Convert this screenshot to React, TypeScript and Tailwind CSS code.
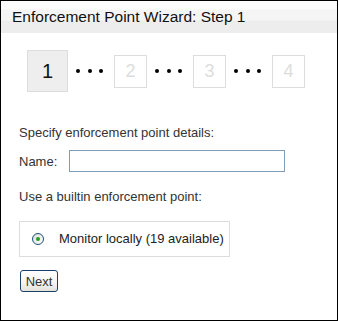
import { useState } from 'react';

const STEPS = [1, 2, 3, 4];

function Dots() {
  return (
    <span className="mx-[8px] mr-[11px] flex w-[27px] items-center justify-between">
      <span className="h-[4px] w-[4px] rounded-full bg-black" />
      <span className="h-[4px] w-[4px] rounded-full bg-black" />
      <span className="h-[4px] w-[4px] rounded-full bg-black" />
    </span>
  );
}

export default function App() {
  const [name, setName] = useState('');

  return (
    <div className="h-[321px] w-[338px] border border-black bg-white font-['Liberation_Sans',Arial,sans-serif] text-[13px] text-[#333]">
      <div className="h-[32px] bg-[linear-gradient(#fcfcfc_0,#fcfcfc_8px,#f5f5f5_9px,#f5f5f5_19px,#ededed_20px,#ededed_100%)] pl-[11px] pt-[7px] text-[15.5px] leading-[18px] text-[#111]">
        Enforcement Point Wizard: Step 1
      </div>

      <div className="ml-[26px] mt-[17px] flex items-center">
        {STEPS.map((n, i) => (
          <div key={n} className="flex items-center">
            {i > 0 && <Dots />}
            {n === 1 ? (
              <div className="flex h-[42px] w-[41px] items-center justify-center border border-[#dddddd] bg-[#eeeeee] text-[20px] text-[#111]">
                {n}
              </div>
            ) : (
              <div className="flex h-[33px] w-[33px] items-center justify-center border border-[#dddddd] bg-white text-[18px] text-[#dddddd]">
                {n}
              </div>
            )}
          </div>
        ))}
      </div>

      <div className="ml-[18px] mt-[33px] leading-[15px]">Specify enforcement point details:</div>

      <div className="ml-[18px] mt-[10px] flex items-center">
        <label htmlFor="ep-name" className="w-[50px] leading-[15px]">Name:</label>
        <input
          id="ep-name"
          value={name}
          onChange={(e) => setName(e.target.value)}
          className="h-[22px] w-[216px] border border-[#7f9db9] bg-white px-[2px] outline-none"
        />
      </div>

      <div className="ml-[18px] mt-[17px] leading-[15px]">Use a builtin enforcement point:</div>

      <div className="ml-[18px] mt-[17px] flex h-[36px] w-[211px] items-center border border-[#dddddd] pl-[12px]">
        <span className="flex h-[12px] w-[12px] items-center justify-center rounded-full border border-[#1c5180] bg-[linear-gradient(135deg,#dcdcd5,#ffffff)]">
          <span className="h-[4px] w-[4px] rounded-full bg-[#21a121]" />
        </span>
        <span className="ml-[15px] text-[#222]">Monitor locally (19 available)</span>
      </div>

      <button
        type="button"
        className="ml-[19px] mt-[13px] flex h-[22px] w-[38px] items-center justify-center rounded-[3px] border border-[#1c3f6e] bg-[linear-gradient(#ffffff,#f3f3ef_60%,#e3e2da)] leading-[15px] text-[#333]"
      >
        Next
      </button>
    </div>
  );
}
